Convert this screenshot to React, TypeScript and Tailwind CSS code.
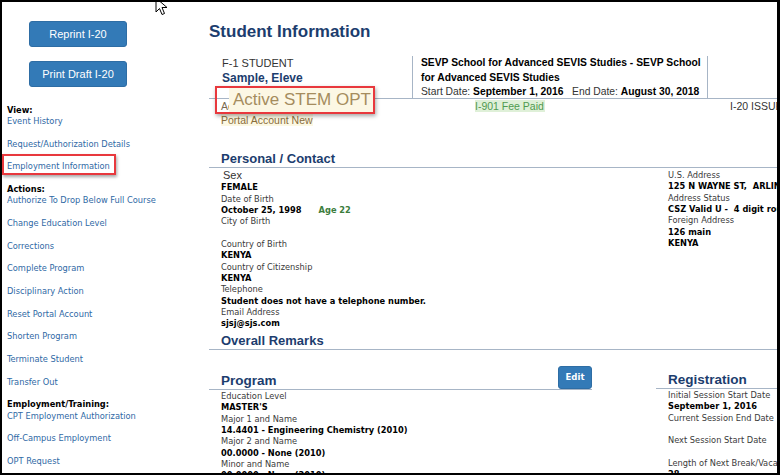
import React from 'react';

const tahoma = {
    fontFamily: '"DejaVu Sans Condensed", "DejaVu Sans", sans-serif',
    fontStretch: 'condensed' as const,
};

const arial = { fontFamily: '"Liberation Sans", Arial, sans-serif', fontStretch: 'normal' as const };

const sideLinks: { head?: string; links: string[] }[] = [
    { head: 'View:', links: ['Event History', 'Request/Authorization Details', 'Employment Information'] },
    {
        head: 'Actions:',
        links: [
            'Authorize To Drop Below Full Course',
            'Change Education Level',
            'Corrections',
            'Complete Program',
            'Disciplinary Action',
            'Reset Portal Account',
            'Shorten Program',
            'Terminate Student',
            'Transfer Out',
        ],
    },
    { head: 'Employment/Training:', links: ['CPT Employment Authorization', 'Off-Campus Employment', 'OPT Request'] },
];

function Label({ children }: { children?: React.ReactNode }) {
    return <div className="h-[11.35px] leading-[11.35px] text-[#3a3a3a] whitespace-pre">{children}</div>;
}

function Value({ children }: { children?: React.ReactNode }) {
    return <div className="h-[11.35px] leading-[11.35px] font-bold text-black whitespace-pre">{children}</div>;
}

function SectionHead({ title }: { title: string }) {
    return (
        <div className="border-b border-[#a7b5c6] pl-[12px]">
            <h2 className="text-[13px] leading-[16px] font-bold text-[#1c3d6e]" style={arial}>
                {title}
            </h2>
        </div>
    );
}

function BlueButton({ label }: { label: string }) {
    return (
        <button
            className="w-[98px] h-[26px] text-[11px] bg-[#337ab7] border border-[#2e6da4] rounded-[3px] text-white flex items-center justify-center"
            style={arial}
        >
            {label}
        </button>
    );
}

function Cursor() {
    return (
        <svg className="absolute left-[153px] top-[-5px]" width="14" height="20" viewBox="0 0 14 20">
            <path d="M1 1 L1 15 L4.5 11.5 L7 17.5 L9.5 16.5 L7 10.5 L12 10.5 Z" fill="white" stroke="black" strokeWidth="1" />
        </svg>
    );
}

export default function App() {
    return (
        <div className="w-[780px] h-[475px] relative overflow-hidden bg-white border-black border-t-2 border-l-2 border-r-[3px] border-b-[2px] flex">
            <Cursor />

            {/* Sidebar */}
            <aside className="w-[207px] shrink-0 pt-[19px] text-[9.2px]" style={tahoma}>
                <div className="flex flex-col gap-[14px] pl-[27px]">
                    <BlueButton label="Reprint I-20" />
                    <BlueButton label="Print Draft I-20" />
                </div>
                <div className="mt-[16.5px] pl-[5px]">
                    {sideLinks.map((group) => (
                        <div key={group.head}>
                            <div className="h-[11.35px] leading-[11.35px] font-bold text-black">{group.head}</div>
                            {group.links.map((l) => (
                                <div key={l} className="h-[22.7px] leading-[11.35px] text-[#2f69a5]">
                                    {l === 'Employment Information' ? (
                                        <span className="relative inline-block">
                                            {l}
                                            <span className="absolute left-[-5px] top-[-6px] w-[114px] h-[21px] border-2 border-[#e8383d] shadow-[1px_2px_3px_rgba(0,0,0,0.35)]" />
                                        </span>
                                    ) : (
                                        l
                                    )}
                                </div>
                            ))}
                        </div>
                    ))}
                </div>
            </aside>

            {/* Main */}
            <main className="flex-1 min-w-0 pt-[20px]" style={arial}>
                <h1 className="text-[17px] leading-[20px] font-bold text-[#1c3d6e] whitespace-nowrap">Student Information</h1>

                {/* header card */}
                <div className="mt-[14px] flex border-b border-[#a7b5c6] h-[43px]">
                    <div className="w-[203px] pl-[13px] shrink-0">
                        <div className="text-[11px] leading-[14px] text-[#333]">F-1 STUDENT</div>
                        <div className="text-[12px] leading-[16px] font-bold text-[#1c3d6e]">Sample, Eleve</div>
                    </div>
                    <div className="w-[296px] shrink-0 border-l border-r border-[#a7b5c6] pl-[8px] text-[10.3px] leading-[14.5px] text-black">
                        <div className="font-bold">SEVP School for Advanced SEVIS Studies - SEVP School for Advanced SEVIS Studies</div>
                        <div className="whitespace-nowrap">
                            <span className="text-[#333]">Start Date: </span>
                            <span className="font-bold">September 1, 2016</span>
                            <span className="text-[#333]">&nbsp;&nbsp; End Date: </span>
                            <span className="font-bold">August 30, 2018</span>
                        </div>
                    </div>
                </div>

                <div className="relative pl-[12px]">
                    <div className="grid grid-cols-[254px_255px_1fr] text-[10.5px] leading-[14px]">
                        <div className="text-[#7a6a50]">Active STEM OPT</div>
                        <div>
                            <span className="bg-[#dff0d8] text-[#4f9a4f] pr-[1px]">I-901 Fee Paid</span>
                        </div>
                        <div className="text-[#333] whitespace-nowrap">I-20 ISSUED</div>
                    </div>
                    <div className="text-[10.5px] leading-[14px]">
                        <span className="bg-[#fcf8e3] text-[#8a6d3b]">Portal Account New</span>
                    </div>

                    {/* callout over the status */}
                    <div className="absolute left-[6px] top-[-13px] w-[160px] h-[28px] border-2 border-[#e8383d] shadow-[1px_2px_4px_rgba(0,0,0,0.35)] pl-[12px]">
                        <div className="h-full bg-[#fcf7e4] flex items-center pl-[4px]">
                            <span className="text-[17px] leading-[20px] text-[#a58c5e] whitespace-nowrap">Active STEM OPT</span>
                        </div>
                    </div>
                </div>

                {/* Personal / Contact */}
                <div className="mt-[24px]">
                    <SectionHead title="Personal / Contact" />
                    <div className="flex mt-[2px] text-[9.2px]" style={tahoma}>
                        <div className="w-[447px] shrink-0 pl-[12px]">
                            <div className="h-[11.35px] leading-[11.35px] text-[11px] text-[#333] pl-[2px]" style={arial}>
                                Sex
                            </div>
                            <Value>FEMALE</Value>
                            <Label>Date of Birth</Label>
                            <Value>
                                October 25, 1998<span className="ml-[17px] text-[#3c7d3c]">Age 22</span>
                            </Value>
                            <Label>City of Birth</Label>
                            <Label> </Label>
                            <Label>Country of Birth</Label>
                            <Value>KENYA</Value>
                            <Label>Country of Citizenship</Label>
                            <Value>KENYA</Value>
                            <Label>Telephone</Label>
                            <Value>Student does not have a telephone number.</Value>
                            <Label>Email Address</Label>
                            <Value>sjsj@sjs.com</Value>
                        </div>
                        <div className="pl-[12px] -mt-[1px]">
                            <Label>U.S. Address</Label>
                            <Value>125 N WAYNE ST,  ARLINGTON, VA 22201</Value>
                            <Label>Address Status</Label>
                            <Value>CSZ Valid U -  4 digit route code not found</Value>
                            <Label>Foreign Address</Label>
                            <Value>126 main</Value>
                            <Value>KENYA</Value>
                        </div>
                    </div>
                </div>

                {/* Overall Remarks */}
                <div className="mt-[4px]">
                    <SectionHead title="Overall Remarks" />
                </div>

                {/* Program / Registration */}
                <div className="mt-[16px] flex text-[9.2px]" style={tahoma}>
                    <div className="w-[383px] shrink-0">
                        <div className="flex items-end justify-between border-b border-[#a7b5c6] pl-[12px]">
                            <h2 className="text-[13.5px] leading-[16px] font-bold text-[#1c3d6e]" style={arial}>
                                Program
                            </h2>
                            <button className="w-[34px] h-[23px] bg-[#337ab7] border border-[#2e6da4] rounded-[3px] text-white text-[9.5px] font-bold flex items-center justify-center">
                                Edit
                            </button>
                        </div>
                        <div className="pl-[12px]">
                            <Label>Education Level</Label>
                            <Value>MASTER'S</Value>
                            <Label>Major 1 and Name</Label>
                            <Value>14.4401 - Engineering Chemistry (2010)</Value>
                            <Label>Major 2 and Name</Label>
                            <Value>00.0000 - None (2010)</Value>
                            <Label>Minor and Name</Label>
                            <Value>00.0000 - None (2010)</Value>
                        </div>
                    </div>
                    <div className="ml-[64px] flex-1 min-w-0">
                        <div className="flex items-end h-[23px] border-b border-[#a7b5c6] pl-[12px]">
                            <h2 className="text-[13.5px] leading-[16px] font-bold text-[#1c3d6e]" style={arial}>
                                Registration
                            </h2>
                        </div>
                        <div className="pl-[12px]">
                            <Label>Initial Session Start Date</Label>
                            <Value>September 1, 2016</Value>
                            <Label>Current Session End Date</Label>
                            <Label> </Label>
                            <Label>Next Session Start Date</Label>
                            <Label> </Label>
                            <Label>Length of Next Break/Vacation</Label>
                            <Value>28</Value>
                        </div>
                    </div>
                </div>
            </main>
        </div>
    );
}
